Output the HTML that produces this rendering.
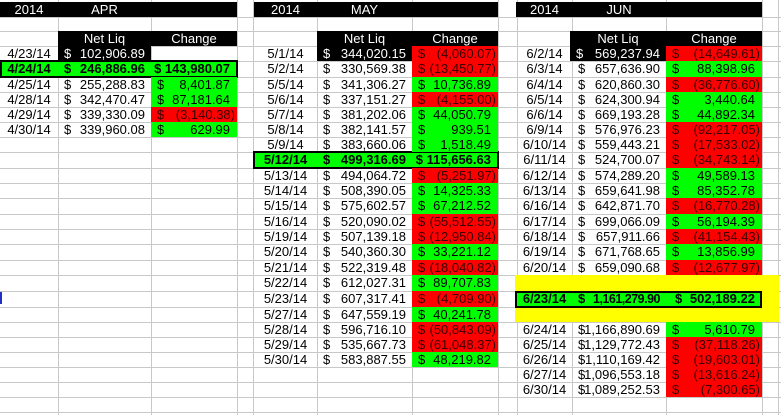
<!DOCTYPE html>
<html><head><meta charset="utf-8"><style>
*{margin:0;padding:0;box-sizing:border-box}
body{width:781px;height:415px;overflow:hidden;background:#fff;position:relative;font-family:"Liberation Sans",Arial,sans-serif;font-size:13px;color:#000}
.v{position:absolute;top:0;width:1px;height:415px;background:#c8c8c8}
.h{position:absolute;left:0;width:781px;height:1px;background:#c8c8c8}
.r{position:absolute;left:0;width:781px}
.c{position:absolute;top:0;height:100%;white-space:nowrap}
.A{left:0;width:58px}.B{left:58px;width:93px}.C{left:151px;width:86px}
.E{left:254px;width:63px}.F{left:317px;width:95px}.G{left:412px;width:86px}
.I{left:517px;width:55px}.J{left:572px;width:94px}.K{left:666px;width:96px}
.d{text-align:center}
.c i{font-style:normal;position:absolute;left:6px;top:0}
.c b{font-weight:normal;position:absolute;right:6px;top:0}
.p b{right:7px}.m b{right:2px}
.g{background:#00ff00}.x{background:#ff0000;color:#3a0000}
.k{background:#000;color:#fff}
.hl{position:absolute;background:#00ff00;border:2px solid #000}
.bold,.bold b{font-weight:bold}
</style></head><body>
<div class="h" style="top:17px"></div><div class="h" style="top:31px"></div><div class="h" style="top:46px"></div><div class="h" style="top:61px"></div><div class="h" style="top:77px"></div><div class="h" style="top:92px"></div><div class="h" style="top:107px"></div><div class="h" style="top:122px"></div><div class="h" style="top:137px"></div><div class="h" style="top:152px"></div><div class="h" style="top:168px"></div><div class="h" style="top:183px"></div><div class="h" style="top:198px"></div><div class="h" style="top:214px"></div><div class="h" style="top:229px"></div><div class="h" style="top:244px"></div><div class="h" style="top:260px"></div><div class="h" style="top:275px"></div><div class="h" style="top:291px"></div><div class="h" style="top:307px"></div><div class="h" style="top:322px"></div><div class="h" style="top:337px"></div><div class="h" style="top:352px"></div><div class="h" style="top:367px"></div><div class="h" style="top:382px"></div><div class="h" style="top:397px"></div><div class="h" style="top:412px"></div>
<div class="v" style="left:58px"></div><div class="v" style="left:151px"></div><div class="v" style="left:237px"></div><div class="v" style="left:253px"></div><div class="v" style="left:317px"></div><div class="v" style="left:412px"></div><div class="v" style="left:498px"></div><div class="v" style="left:517px"></div><div class="v" style="left:572px"></div><div class="v" style="left:666px"></div><div class="v" style="left:762px"></div><div class="v" style="left:778px"></div>

<div class="r" style="top:2px;height:15px;line-height:15px">
<div class="c k" style="left:0;width:237px"></div>
<div class="c k" style="left:254px;width:244px"></div>
<div class="c k" style="left:516px;width:246px"></div>
<div class="c A d" style="color:#fff">2014</div><div class="c B d" style="color:#fff">APR</div>
<div class="c E d" style="color:#fff">2014</div><div class="c F d" style="color:#fff">MAY</div>
<div class="c I d" style="color:#fff">2014</div><div class="c J d" style="color:#fff">JUN</div>
</div>
<div class="r" style="top:31px;height:15px;line-height:15px">
<div class="c B d k">Net Liq</div><div class="c C d k">Change</div>
<div class="c F d k">Net Liq</div><div class="c G d k">Change</div>
<div class="c J d k" style="left:570px;width:96px">Net Liq</div><div class="c K d k">Change</div>
</div>

<div style="position:absolute;left:515px;top:275px;width:264px;height:47px;background:#ffff00"></div>
<div class="hl" style="left:0;top:60px;width:238px;height:18px"></div>
<div class="hl" style="left:253px;top:151px;width:246px;height:18px"></div>
<div class="hl" style="left:515px;top:291px;width:247px;height:17px"></div>

<div class="r" style="top:46px;height:15px;line-height:15px">
<div class="c A d">4/23/14</div><div class="c B k"><i>$</i><b>102,906.89</b></div>
<div class="c E d">5/1/14</div><div class="c F k"><i>$</i><b>344,020.15</b></div><div class="c G x m"><i>$</i><b>(4,060.07)</b></div>
<div class="c I d">6/2/14</div><div class="c J k" style="left:570px;width:96px"><i>$</i><b>569,237.94</b></div><div class="c K x m"><i>$</i><b>(14,649.61)</b></div>
</div>
<div class="r" style="top:61px;height:16px;line-height:16px">
<div class="c A d bold">4/24/14</div><div class="c B bold"><i>$</i><b>246,886.96</b></div><div class="c C p bold"><b>$ 143,980.07</b></div>
<div class="c E d">5/2/14</div><div class="c F"><i>$</i><b>330,569.38</b></div><div class="c G x m"><i>$</i><b>(13,450.77)</b></div>
<div class="c I d">6/3/14</div><div class="c J"><i>$</i><b>657,636.90</b></div><div class="c K g p"><i>$</i><b>88,398.96</b></div>
</div>
<div class="r" style="top:77px;height:15px;line-height:15px">
<div class="c A d">4/25/14</div><div class="c B"><i>$</i><b>255,288.83</b></div><div class="c C g p"><i>$</i><b>8,401.87</b></div>
<div class="c E d">5/5/14</div><div class="c F"><i>$</i><b>341,306.27</b></div><div class="c G g p"><i>$</i><b>10,736.89</b></div>
<div class="c I d">6/4/14</div><div class="c J"><i>$</i><b>620,860.30</b></div><div class="c K x m"><i>$</i><b>(36,776.60)</b></div>
</div>
<div class="r" style="top:92px;height:15px;line-height:15px">
<div class="c A d">4/28/14</div><div class="c B"><i>$</i><b>342,470.47</b></div><div class="c C g p"><i>$</i><b>87,181.64</b></div>
<div class="c E d">5/6/14</div><div class="c F"><i>$</i><b>337,151.27</b></div><div class="c G x m"><i>$</i><b>(4,155.00)</b></div>
<div class="c I d">6/5/14</div><div class="c J"><i>$</i><b>624,300.94</b></div><div class="c K g p"><i>$</i><b>3,440.64</b></div>
</div>
<div class="r" style="top:107px;height:15px;line-height:15px">
<div class="c A d">4/29/14</div><div class="c B"><i>$</i><b>339,330.09</b></div><div class="c C x m"><i>$</i><b>(3,140.38)</b></div>
<div class="c E d">5/7/14</div><div class="c F"><i>$</i><b>381,202.06</b></div><div class="c G g p"><i>$</i><b>44,050.79</b></div>
<div class="c I d">6/6/14</div><div class="c J"><i>$</i><b>669,193.28</b></div><div class="c K g p"><i>$</i><b>44,892.34</b></div>
</div>
<div class="r" style="top:122px;height:15px;line-height:15px">
<div class="c A d">4/30/14</div><div class="c B"><i>$</i><b>339,960.08</b></div><div class="c C g p"><i>$</i><b>629.99</b></div>
<div class="c E d">5/8/14</div><div class="c F"><i>$</i><b>382,141.57</b></div><div class="c G g p"><i>$</i><b>939.51</b></div>
<div class="c I d">6/9/14</div><div class="c J"><i>$</i><b>576,976.23</b></div><div class="c K x m"><i>$</i><b>(92,217.05)</b></div>
</div>
<div class="r" style="top:137px;height:15px;line-height:15px">
<div class="c E d">5/9/14</div><div class="c F"><i>$</i><b>383,660.06</b></div><div class="c G g p"><i>$</i><b>1,518.49</b></div>
<div class="c I d">6/10/14</div><div class="c J"><i>$</i><b>559,443.21</b></div><div class="c K x m"><i>$</i><b>(17,533.02)</b></div>
</div>
<div class="r" style="top:152px;height:16px;line-height:16px">
<div class="c E d bold">5/12/14</div><div class="c F bold"><i>$</i><b>499,316.69</b></div><div class="c G p bold"><b>$ 115,656.63</b></div>
<div class="c I d">6/11/14</div><div class="c J"><i>$</i><b>524,700.07</b></div><div class="c K x m"><i>$</i><b>(34,743.14)</b></div>
</div>
<div class="r" style="top:168px;height:15px;line-height:15px">
<div class="c E d">5/13/14</div><div class="c F"><i>$</i><b>494,064.72</b></div><div class="c G x m"><i>$</i><b>(5,251.97)</b></div>
<div class="c I d">6/12/14</div><div class="c J"><i>$</i><b>574,289.20</b></div><div class="c K g p"><i>$</i><b>49,589.13</b></div>
</div>
<div class="r" style="top:183px;height:15px;line-height:15px">
<div class="c E d">5/14/14</div><div class="c F"><i>$</i><b>508,390.05</b></div><div class="c G g p"><i>$</i><b>14,325.33</b></div>
<div class="c I d">6/13/14</div><div class="c J"><i>$</i><b>659,641.98</b></div><div class="c K g p"><i>$</i><b>85,352.78</b></div>
</div>
<div class="r" style="top:198px;height:16px;line-height:16px">
<div class="c E d">5/15/14</div><div class="c F"><i>$</i><b>575,602.57</b></div><div class="c G g p"><i>$</i><b>67,212.52</b></div>
<div class="c I d">6/16/14</div><div class="c J"><i>$</i><b>642,871.70</b></div><div class="c K x m"><i>$</i><b>(16,770.28)</b></div>
</div>
<div class="r" style="top:214px;height:15px;line-height:15px">
<div class="c E d">5/16/14</div><div class="c F"><i>$</i><b>520,090.02</b></div><div class="c G x m"><i>$</i><b>(55,512.55)</b></div>
<div class="c I d">6/17/14</div><div class="c J"><i>$</i><b>699,066.09</b></div><div class="c K g p"><i>$</i><b>56,194.39</b></div>
</div>
<div class="r" style="top:229px;height:15px;line-height:15px">
<div class="c E d">5/19/14</div><div class="c F"><i>$</i><b>507,139.18</b></div><div class="c G x m"><i>$</i><b>(12,950.84)</b></div>
<div class="c I d">6/18/14</div><div class="c J"><i>$</i><b>657,911.66</b></div><div class="c K x m"><i>$</i><b>(41,154.43)</b></div>
</div>
<div class="r" style="top:244px;height:16px;line-height:16px">
<div class="c E d">5/20/14</div><div class="c F"><i>$</i><b>540,360.30</b></div><div class="c G g p"><i>$</i><b>33,221.12</b></div>
<div class="c I d">6/19/14</div><div class="c J"><i>$</i><b>671,768.65</b></div><div class="c K g p"><i>$</i><b>13,856.99</b></div>
</div>
<div class="r" style="top:260px;height:15px;line-height:15px">
<div class="c E d">5/21/14</div><div class="c F"><i>$</i><b>522,319.48</b></div><div class="c G x m"><i>$</i><b>(18,040.82)</b></div>
<div class="c I d">6/20/14</div><div class="c J"><i>$</i><b>659,090.68</b></div><div class="c K x m"><i>$</i><b>(12,677.97)</b></div>
</div>
<div class="r" style="top:275px;height:16px;line-height:16px">
<div class="c E d">5/22/14</div><div class="c F"><i>$</i><b>612,027.31</b></div><div class="c G g p"><i>$</i><b>89,707.83</b></div>
</div>
<div class="r" style="top:291px;height:16px;line-height:16px">
<div class="c E d">5/23/14</div><div class="c F"><i>$</i><b>607,317.41</b></div><div class="c G x m"><i>$</i><b>(4,709.90)</b></div>
<div class="c I d bold">6/23/14</div><div class="c J bold"><i>$</i><b style="letter-spacing:-0.5px;font-size:12.5px">1,161,279.90</b></div><div class="c K p bold"><i style="left:9px">$</i><b>502,189.22</b></div>
</div>
<div class="r" style="top:307px;height:15px;line-height:15px">
<div class="c E d">5/27/14</div><div class="c F"><i>$</i><b>647,559.19</b></div><div class="c G g p"><i>$</i><b>40,241.78</b></div>
</div>
<div class="r" style="top:322px;height:15px;line-height:15px">
<div class="c E d">5/28/14</div><div class="c F"><i>$</i><b>596,716.10</b></div><div class="c G x m"><i>$</i><b>(50,843.09)</b></div>
<div class="c I d">6/24/14</div><div class="c J"><i>$</i><b>1,166,890.69</b></div><div class="c K g p"><i>$</i><b>5,610.79</b></div>
</div>
<div class="r" style="top:337px;height:15px;line-height:15px">
<div class="c E d">5/29/14</div><div class="c F"><i>$</i><b>535,667.73</b></div><div class="c G x m"><i>$</i><b>(61,048.37)</b></div>
<div class="c I d">6/25/14</div><div class="c J"><i>$</i><b>1,129,772.43</b></div><div class="c K x m"><i>$</i><b>(37,118.26)</b></div>
</div>
<div class="r" style="top:352px;height:15px;line-height:15px">
<div class="c E d">5/30/14</div><div class="c F"><i>$</i><b>583,887.55</b></div><div class="c G g p"><i>$</i><b>48,219.82</b></div>
<div class="c I d">6/26/14</div><div class="c J"><i>$</i><b>1,110,169.42</b></div><div class="c K x m"><i>$</i><b>(19,603.01)</b></div>
</div>
<div class="r" style="top:367px;height:15px;line-height:15px">
<div class="c I d">6/27/14</div><div class="c J"><i>$</i><b>1,096,553.18</b></div><div class="c K x m"><i>$</i><b>(13,616.24)</b></div>
</div>
<div class="r" style="top:382px;height:15px;line-height:15px">
<div class="c I d">6/30/14</div><div class="c J"><i>$</i><b>1,089,252.53</b></div><div class="c K x m"><i>$</i><b>(7,300.65)</b></div>
</div>
<div style="position:absolute;left:0;top:292px;width:2px;height:12px;background:#2030c0"></div>
</body></html>
